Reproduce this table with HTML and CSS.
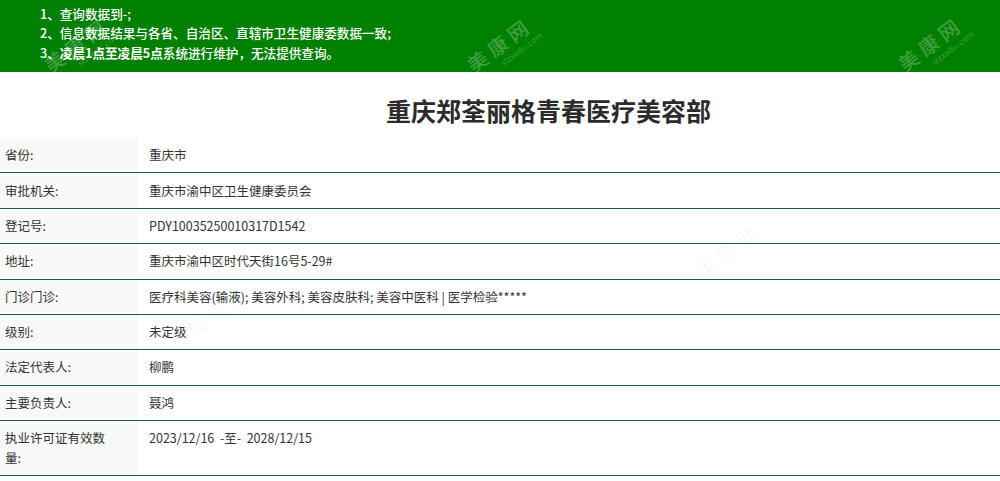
FILE: index.html
```html
<!DOCTYPE html>
<html lang="zh-CN">
<head>
<meta charset="utf-8">
<title>重庆郑荃丽格青春医疗美容部</title>
<link rel="stylesheet" href="styles.css">
</head>
<body>
<div class="page">
  <div class="notice">
    <p class="notice-line">1、查询数据到-;</p>
    <p class="notice-line">2、信息数据结果与各省、自治区、直辖市卫生健康委数据一致;</p>
    <p class="notice-line">3、<strong>凌晨1点至凌晨5点</strong>系统进行维护，无法提供查询。</p>
  </div>

  <h1 class="title">重庆郑荃丽格青春医疗美容部</h1>

  <div class="info">
    <div class="row"><div class="label">省份:</div><div class="value">重庆市</div></div>
    <div class="row"><div class="label">审批机关:</div><div class="value">重庆市渝中区卫生健康委员会</div></div>
    <div class="row"><div class="label">登记号:</div><div class="value">PDY10035250010317D1542</div></div>
    <div class="row"><div class="label">地址:</div><div class="value">重庆市渝中区时代天街16号5-29#</div></div>
    <div class="row"><div class="label">门诊门诊:</div><div class="value">医疗科美容(输液); 美容外科; 美容皮肤科; 美容中医科 | 医学检验*****</div></div>
    <div class="row"><div class="label">级别:</div><div class="value">未定级</div></div>
    <div class="row"><div class="label">法定代表人:</div><div class="value">柳鹏</div></div>
    <div class="row"><div class="label">主要负责人:</div><div class="value">聂鸿</div></div>
    <div class="row"><div class="label">执业许可证有效数量:</div><div class="value">2023/12/16&nbsp; -至-&nbsp; 2028/12/15</div></div>
  </div>

  <div class="wm wm-h wm-1"><span class="wm-cn">美康网</span><span class="wm-en">slzxedu.com</span></div>
  <div class="wm wm-h wm-2"><span class="wm-cn">美康网</span><span class="wm-en">slzxedu.com</span></div>
  <div class="wm wm-h wm-3"><span class="wm-cn">美康网</span><span class="wm-en">slzxedu.com</span></div>
  <div class="wm wm-b wm-4"><span class="wm-cn">美康网</span><span class="wm-en">slzxedu.com</span></div>
  <div class="wm wm-b wm-5"><span class="wm-cn">美康网</span><span class="wm-en">slzxedu.com</span></div>
</div>
</body>
</html>
```

FILE: styles.css
```css
html, body {
  margin: 0;
  padding: 0;
  background: #ffffff;
}

body {
  font-family: "Noto Sans CJK SC", "Noto Sans", sans-serif;
  color: #333333;
  font-size: 12.5px;
}

.page {
  position: relative;
  width: 1000px;
  height: 481px;
  overflow: hidden;
}

.notice {
  background: #008000;
  color: #ffffff;
  padding: 4px 0 9px 40px;
  height: 59px;
  font-weight: 500;
}

.notice-line {
  margin: 0;
  line-height: 19.3px;
  font-size: 12.6px;
}

.notice-line strong {
  font-weight: 700;
}

.title {
  margin: 0;
  padding: 19px 0 0 97px;
  height: 47px;
  text-align: center;
  font-size: 25px;
  line-height: 38px;
  font-weight: 600;
  color: #2b2b2b;
}

.info {
  display: flex;
  flex-direction: column;
}

.row {
  display: grid;
  grid-template-columns: 138px 1fr;
  border-bottom: 1px solid #1f5c3e;
}

.label {
  background: #f9f9f9;
  padding: 7.2px 22px 7.2px 5px;
  line-height: 20px;
  color: #333333;
}

.value {
  padding: 7.2px 10px 7.2px 11px;
  line-height: 20px;
  color: #333333;
}

/* watermarks */
.wm {
  position: absolute;
  width: 80px;
  height: 34px;
  transform: rotate(-37deg);
  transform-origin: center center;
  display: flex;
  flex-direction: column;
  align-items: center;
  pointer-events: none;
}

.wm-cn {
  font-size: 20px;
  line-height: 22px;
  letter-spacing: 5px;
  margin-right: -5px;
  font-weight: 500;
  white-space: nowrap;
}

.wm-en {
  font-size: 8px;
  line-height: 10px;
  margin-top: 2px;
  font-family: "DejaVu Sans", sans-serif;
  margin-left: 35px;
  white-space: nowrap;
}

.wm-h {
  color: rgba(255, 255, 255, 0.26);
}

.wm-b {
  color: rgba(0, 0, 0, 0.03);
}

.wm-1 { left: 38px; top: 34px; }
.wm-2 { left: 461px; top: 34px; }
.wm-3 { left: 892px; top: 33px; }
.wm-4 { left: 180px; top: 300px; }
.wm-5 { left: 690px; top: 240px; }
```
